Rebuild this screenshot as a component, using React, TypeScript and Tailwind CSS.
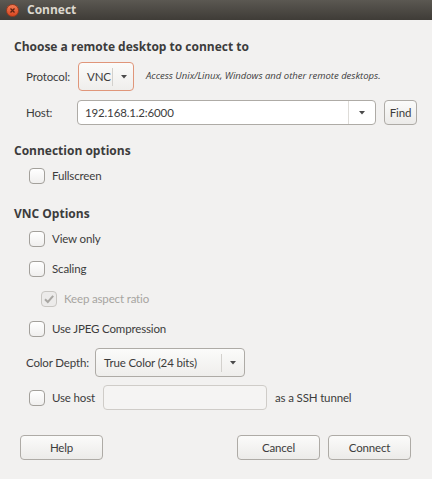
import React from 'react';

const font = { fontFamily: 'Lato, "Open Sans", sans-serif' };
const bold = { fontFamily: '"Open Sans", Lato, sans-serif' };

function Check({ label, checked = false, disabled = false, indent = false }: { label: string; checked?: boolean; disabled?: boolean; indent?: boolean }) {
  return (
    <div className={`flex items-center h-[16px] ${indent ? 'ml-[41px]' : 'ml-[29px]'}`}>
      <span
        className={`w-[16px] h-[16px] rounded-[4px] border flex items-center justify-center ${
          disabled ? 'border-[#c8c6c2] bg-[#ecebea]' : 'border-[#a3a09b] bg-gradient-to-b from-[#ffffff] to-[#f0efee]'
        }`}
      >
        {checked && (
          <svg width="12" height="12" viewBox="0 0 12 12">
            <path d="M2 6.2 L4.8 9 L10.2 2.8" fill="none" stroke={disabled ? '#a9a7a3' : '#3c3c3c'} strokeWidth="2" />
          </svg>
        )}
      </span>
      <span className={`ml-[7px] text-[11.5px] tracking-[-0.15px] ${disabled ? 'text-[#a7a5a1]' : 'text-[#3c3c3c]'}`}>{label}</span>
    </div>
  );
}

function Arrow() {
  return (
    <svg width="6" height="4" viewBox="0 0 6 4">
      <path d="M0 0 H6 L3 3.6 Z" fill="#4a4a4a" />
    </svg>
  );
}

const txt = 'text-[11.5px] tracking-[-0.15px]';
const btn = `w-[83px] h-[25px] rounded-[4px] border border-[#aeaba6] bg-gradient-to-b from-[#fbfbfa] to-[#ecebe9] ${txt} text-[#3c3c3c]`;

export default function App() {
  return (
    <div className="w-[432px] h-[479px] bg-[#f2f1f0] text-[#3c3c3c] overflow-hidden" style={font}>
      {/* title bar */}
      <div className="h-[20px] bg-gradient-to-b from-[#5b5852] to-[#3f3c37] flex items-center">
        <span className="ml-[6px] w-[13px] h-[13px] rounded-full bg-gradient-to-b from-[#f37a53] to-[#d8461f] border border-[#9c3a1e] flex items-center justify-center">
          <svg width="7" height="7" viewBox="0 0 7 7">
            <path d="M1.5 1.5 L5.5 5.5 M5.5 1.5 L1.5 5.5" stroke="#5c2212" strokeWidth="1.3" />
          </svg>
        </span>
        <span className="ml-[8px] text-[12px] font-bold text-[#dcd8cf]" style={bold}>Connect</span>
      </div>

      <div className="pt-[19px] pl-[14px] text-[12px] font-bold text-[#3c3c3c] leading-[16px]" style={bold}>Choose a remote desktop to connect to</div>

      {/* protocol */}
      <div className="flex items-center mt-[7px] h-[29px]">
        <span className={`ml-[26px] w-[52px] ${txt}`}>Protocol:</span>
        <div className="w-[56px] h-[29px] rounded-[4px] border border-[#e0967a] bg-gradient-to-b from-[#fbfbfa] to-[#efeeec] flex items-center">
          <span className={`ml-[8px] w-[25px] ${txt}`}>VNC</span>
          <span className="w-px h-[18px] bg-[#d3d1cd]" />
          <span className="ml-[8px] flex"><Arrow /></span>
        </div>
        <span className="ml-[12px] text-[9.5px] italic text-[#3c3c3c]" style={bold}>Access Unix/Linux, Windows and other remote desktops.</span>
      </div>

      {/* host */}
      <div className="flex items-center mt-[9px] h-[25px]">
        <span className={`ml-[26px] w-[51px] ${txt}`}>Host:</span>
        <div className="w-[299px] h-[25px] rounded-[4px] border border-[#aeaba6] bg-white flex items-center">
          <span className={`ml-[7px] flex-1 ${txt}`}>192.168.1.2:6000</span>
          <span className="w-px h-[23px] bg-[#dedcd8]" />
          <span className="w-[26px] flex justify-center"><Arrow /></span>
        </div>
        <button className={`ml-[8px] w-[33px] h-[25px] rounded-[4px] border border-[#aeaba6] bg-gradient-to-b from-[#fbfbfa] to-[#ecebe9] ${txt}`}>Find</button>
      </div>

      <div className="mt-[18px] pl-[14px] text-[12px] font-bold leading-[16px]" style={bold}>Connection options</div>
      <div className="mt-[9px]"><Check label="Fullscreen" /></div>

      <div className="mt-[22px] pl-[14px] text-[12px] font-bold leading-[16px]" style={bold}>VNC Options</div>
      <div className="mt-[9px] flex flex-col gap-[14px]">
        <Check label="View only" />
        <Check label="Scaling" />
        <Check label="Keep aspect ratio" checked disabled indent />
        <Check label="Use JPEG Compression" />
      </div>

      {/* color depth */}
      <div className="flex items-center mt-[11px] h-[29px]">
        <span className={`ml-[26px] w-[69px] whitespace-nowrap ${txt}`}>Color Depth:</span>
        <div className="w-[150px] h-[29px] rounded-[4px] border border-[#aeaba6] bg-gradient-to-b from-[#fbfbfa] to-[#efeeec] flex items-center">
          <span className={`ml-[8px] flex-1 whitespace-nowrap ${txt}`}>True Color (24 bits)</span>
          <span className="w-px h-[18px] bg-[#d3d1cd]" />
          <span className="w-[22px] flex justify-center"><Arrow /></span>
        </div>
      </div>

      {/* ssh */}
      <div className="flex items-center mt-[8px] h-[25px]">
        <div className="flex items-center ml-[29px]">
          <span className="w-[16px] h-[16px] rounded-[4px] border border-[#a3a09b] bg-gradient-to-b from-[#ffffff] to-[#f0efee]" />
          <span className={`ml-[7px] w-[51px] whitespace-nowrap ${txt}`}>Use host</span>
        </div>
        <div className="w-[164px] h-[25px] rounded-[4px] border border-[#cfccc8] bg-[#f5f4f3]" />
        <span className={`ml-[8px] ${txt}`}>as a SSH tunnel</span>
      </div>

      {/* buttons */}
      <div className="flex items-center mt-[25px] h-[25px] pl-[20px] pr-[21px]">
        <button className={btn}>Help</button>
        <div className="flex-1" />
        <button className={btn}>Cancel</button>
        <button className={`ml-[8px] ${btn}`}>Connect</button>
      </div>
    </div>
  );
}
